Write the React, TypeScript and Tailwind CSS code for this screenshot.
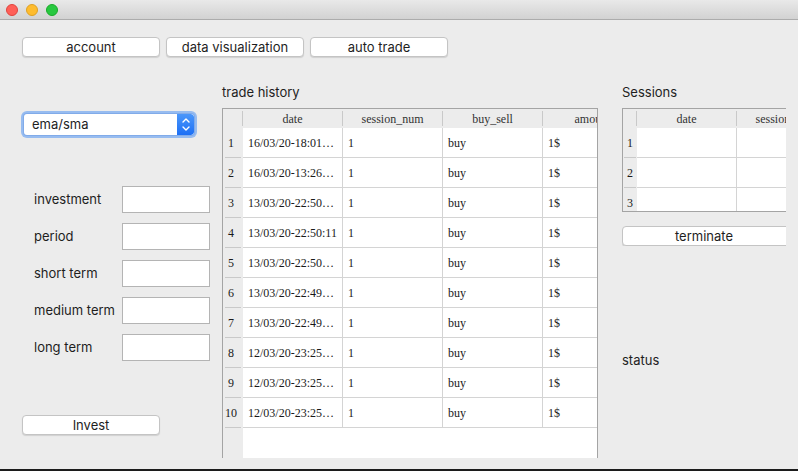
import React from "react";

const trades = [
  "16/03/20-18:01…",
  "16/03/20-13:26…",
  "13/03/20-22:50…",
  "13/03/20-22:50:11",
  "13/03/20-22:50…",
  "13/03/20-22:49…",
  "13/03/20-22:49…",
  "12/03/20-23:25…",
  "12/03/20-23:25…",
  "12/03/20-23:25…",
];

function MacButton({ label, className = "" }: { label: string; className?: string }) {
  return (
    <div
      className={
        "h-[20px] bg-white border border-[#c4c4c4] rounded-[4px] shadow-[0_1px_1px_rgba(0,0,0,0.12)] flex items-center justify-center text-[13px] text-[#1e1e1e] leading-none " +
        className
      }
    >
      {label}
    </div>
  );
}

function Field({ label }: { label: string }) {
  return (
    <div className="flex items-center h-[27px]">
      <div className="w-[100px] shrink-0 pl-[12px] whitespace-nowrap text-[13px] text-[#1e1e1e]">{label}</div>
      <div className="w-[88px] shrink-0 h-[27px] bg-white border border-[#b4b4b4]" />
    </div>
  );
}

export default function App() {
  return (
    <div className="w-[798px] h-[471px] bg-[#ececec] flex flex-col overflow-hidden font-['Inter',sans-serif]">
      {/* title bar */}
      <div className="h-[20px] shrink-0 bg-gradient-to-b from-[#e9e9e9] to-[#d2d2d2] border-b border-[#acacac] flex items-center pl-[6px] gap-[8px]">
        <div className="w-[12px] h-[12px] rounded-full bg-[#ff5f57] border border-[#e0443e]" />
        <div className="w-[12px] h-[12px] rounded-full bg-[#febc2e] border border-[#dea123]" />
        <div className="w-[12px] h-[12px] rounded-full bg-[#28c840] border border-[#1aab29]" />
      </div>

      <div className="flex-1 flex flex-col min-h-0">
        {/* top buttons */}
        <div className="pt-[17px] pl-[22px] flex gap-[6px]">
          <MacButton label="account" className="w-[138px]" />
          <MacButton label="data visualization" className="w-[138px]" />
          <MacButton label="auto trade" className="w-[138px]" />
        </div>

        {/* main */}
        <div className="mt-[27px] pl-[22px] flex">
          {/* left column */}
          <div className="w-[200px] shrink-0 flex flex-col">
            <div className="mt-[27px] w-[176px] h-[27px] rounded-[6px] bg-[#97bcf0] p-[3px] -ml-[1px]">
              <div className="h-[21px] bg-white rounded-[3px] flex items-stretch overflow-hidden shadow-[0_0_0_1px_rgba(90,140,220,0.35)]">
                <div className="flex-1 pl-[8px] flex items-center text-[13px] text-[#1e1e1e]">ema/sma</div>
                <div className="w-[17px] bg-gradient-to-b from-[#4b97fa] to-[#1c6ff5] rounded-r-[3px] flex flex-col items-center justify-center gap-[3px]">
                  <svg width="8" height="5" viewBox="0 0 8 5">
                    <path d="M1 4 L4 1 L7 4" fill="none" stroke="white" strokeWidth="1.4" strokeLinecap="round" strokeLinejoin="round" />
                  </svg>
                  <svg width="8" height="5" viewBox="0 0 8 5">
                    <path d="M1 1 L4 4 L7 1" fill="none" stroke="white" strokeWidth="1.4" strokeLinecap="round" strokeLinejoin="round" />
                  </svg>
                </div>
              </div>
            </div>

            <div className="mt-[48px] flex flex-col gap-[10px]">
              <Field label="investment" />
              <Field label="period" />
              <Field label="short term" />
              <Field label="medium term" />
              <Field label="long term" />
            </div>

            <MacButton label="Invest" className="mt-[54px] w-[138px]" />
          </div>

          {/* middle column */}
          <div className="w-[376px] shrink-0 flex flex-col">
            <div className="h-[16px] leading-[16px] text-[13px] text-[#1e1e1e]">trade history</div>
            <div className="mt-[8px] h-[350px] border-l border-t border-r border-[#a4a4a4] flex flex-col overflow-hidden font-['Liberation_Serif',serif] text-[12px] text-[#1a1a1a]">
              {/* header */}
              <div className="h-[19px] shrink-0 flex items-center overflow-hidden">
                <div className="w-[20px] shrink-0 h-[15px] border-r border-[#c9c9c9]" />
                {["date", "session_num", "buy_sell", "amount"].map((h) => (
                  <div
                    key={h}
                    className="w-[100px] shrink-0 h-[15px] border-r border-[#c9c9c9] flex items-center justify-center text-[#333]"
                  >
                    {h}
                  </div>
                ))}
              </div>
              {trades.map((d, i) => (
                <div key={i} className="h-[30px] shrink-0 flex overflow-hidden">
                  <div className="w-[20px] shrink-0 px-[2px] bg-[#ececec]">
                    <div className="h-full border-b border-[#c9c9c9] flex items-center justify-center pr-[4px]">
                      {i + 1}
                    </div>
                  </div>
                  {[d, "1", "buy", "1$"].map((c, j) => (
                    <div
                      key={j}
                      className="w-[100px] shrink-0 h-full bg-white border-r border-b border-[#d4d4d4] flex items-center pl-[5px] whitespace-nowrap"
                    >
                      {c}
                    </div>
                  ))}
                </div>
              ))}
              <div className="flex-1 flex">
                <div className="w-[20px] shrink-0 bg-[#ececec]" />
                <div className="flex-1 bg-white" />
              </div>
            </div>
          </div>

          {/* right column */}
          <div className="ml-[24px] w-[164px] shrink-0 flex flex-col">
            <div className="h-[16px] leading-[16px] text-[13px] text-[#1e1e1e]">Sessions</div>
            <div className="mt-[8px] h-[104px] w-[164px] border-l border-t border-b border-[#a4a4a4] flex flex-col overflow-hidden font-['Liberation_Serif',serif] text-[12px] text-[#1a1a1a]">
              <div className="h-[19px] shrink-0 flex items-center overflow-hidden">
                <div className="w-[14px] shrink-0 h-[15px] border-r border-[#c9c9c9]" />
                {["date", "session_num"].map((h) => (
                  <div
                    key={h}
                    className="w-[100px] shrink-0 h-[15px] border-r border-[#c9c9c9] flex items-center justify-center text-[#333] whitespace-nowrap"
                  >
                    {h}
                  </div>
                ))}
              </div>
              {[1, 2, 3].map((n) => (
                <div key={n} className="h-[30px] shrink-0 flex overflow-hidden">
                  <div className="w-[14px] shrink-0 px-[1px] bg-[#ececec]">
                    <div className="h-full border-b border-[#c9c9c9] flex items-center justify-center">{n}</div>
                  </div>
                  {[0, 1].map((j) => (
                    <div key={j} className="w-[100px] shrink-0 h-full bg-white border-r border-b border-[#d4d4d4]" />
                  ))}
                </div>
              ))}
            </div>
            <div className="mt-[14px] w-[164px] overflow-hidden">
              <MacButton label="terminate" className="w-[190px] pr-[26px]" />
            </div>
            <div className="mt-[106px] h-[16px] leading-[16px] text-[13px] text-[#1e1e1e]">status</div>
          </div>
        </div>
      </div>

      <div className="h-[2px] shrink-0 bg-[#1c1c1c]" />
    </div>
  );
}
